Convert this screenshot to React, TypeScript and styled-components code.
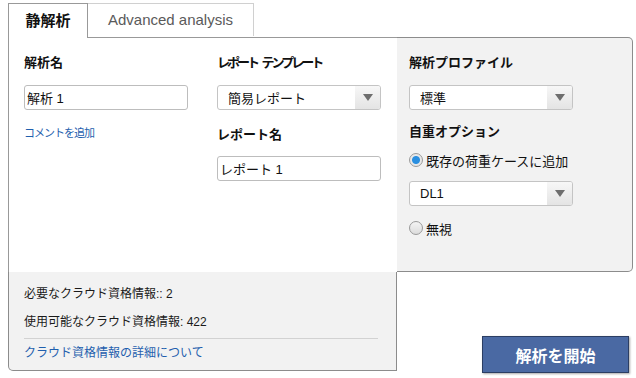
import React from 'react'
import styled, { createGlobalStyle } from 'styled-components'

const GlobalStyle = createGlobalStyle`
  html, body {
    margin: 0;
    padding: 0;
    background: #ffffff;
  }
  body {
    font-family: "Liberation Sans", "Noto Sans CJK JP", sans-serif;
    color: #111;
  }
  * {
    box-sizing: border-box;
  }
`

const Page = styled.div`
  width: 636px;
  height: 378px;
  padding: 3px 0 0 8px;
`

const TabBar = styled.div`
  display: flex;
  align-items: flex-start;
  height: 34px;
  position: relative;
  z-index: 1;
`

const Tab = styled.div<{ $active?: boolean }>`
  display: flex;
  align-items: center;
  justify-content: center;
  background: #fff;
  font-size: 15px;
  line-height: 18px;
  padding-bottom: 1px;
  ${(p) =>
    p.$active
      ? `
    width: 80px;
    height: 35px;
    border: 1px solid #999;
    border-bottom: none;
    font-weight: bold;
    color: #111;
  `
      : `
    width: 166px;
    height: 33px;
    border-top: 1px solid #d0d0d0;
    border-right: 1px solid #d0d0d0;
    color: #5a5a5a;
  `}
`

const Frame = styled.div`
  display: grid;
  grid-template-columns: 389px 236px;
  grid-template-rows: 235px 99px;
  width: 625px;
`

const MainArea = styled.div`
  border-left: 1px solid #999;
  border-top: 1px solid #999;
  background: #fff;
  padding: 16px 0 0 15px;
  display: grid;
  grid-template-columns: 164px 163px;
  column-gap: 29px;
  align-content: start;
`

const Column = styled.div`
  display: flex;
  flex-direction: column;
  align-items: flex-start;
`

const SidePanel = styled.div`
  background: #f2f2f2;
  border: 1px solid #8c8c8c;
  border-left: none;
  border-radius: 0 5px 5px 0;
  padding: 16px 0 0 12px;
  display: flex;
  flex-direction: column;
  align-items: flex-start;
`

const Footer = styled.div`
  background: #f2f2f2;
  border: 1px solid #8c8c8c;
  border-top: none;
  border-radius: 0 0 0 5px;
  padding: 13px 18px 0 15px;
  display: flex;
  flex-direction: column;
`

const ButtonCell = styled.div`
  display: flex;
  justify-content: flex-end;
  align-items: flex-end;
  padding-right: 4px;
`

const Label = styled.div<{ $gap?: number; $tight?: number }>`
  font-size: 13px;
  line-height: 18px;
  font-weight: bold;
  color: #111;
  margin-top: ${(p) => p.$gap ?? 0}px;
  letter-spacing: ${(p) => p.$tight ?? 0}px;
  word-spacing: 4px;
  white-space: nowrap;
`

const TextInput = styled.input<{ $gap?: number }>`
  width: 164px;
  height: 25px;
  margin: ${(p) => p.$gap ?? 0}px 0 0 0;
  padding: 0 0 0 2px;
  border: 1px solid #bdbdbd;
  border-radius: 3px;
  background: #fff;
  font-family: "Liberation Sans", "Noto Sans CJK JP", sans-serif;
  font-size: 13px;
  color: #111;
  outline: none;
`

const SelectBox = styled.div<{ $gap?: number }>`
  display: flex;
  width: 164px;
  height: 25px;
  margin-top: ${(p) => p.$gap ?? 0}px;
  border: 1px solid #c4c4c4;
  border-radius: 3px;
  background: #fff;
  overflow: hidden;
`

const SelectText = styled.div`
  flex: 1;
  display: flex;
  align-items: center;
  padding-left: 10px;
  font-size: 13px;
  color: #111;
`

const SelectArrow = styled.div`
  width: 25px;
  display: flex;
  align-items: center;
  justify-content: center;
  background: linear-gradient(#f7f7f7, #e4e4e4);
  &::after {
    content: '';
    width: 0;
    height: 0;
    border-left: 5px solid transparent;
    border-right: 5px solid transparent;
    border-top: 7px solid #6e6e6e;
  }
`

const LinkText = styled.a<{ $size?: number; $gap?: number; $tight?: number }>`
  display: block;
  color: #1f5fae;
  font-size: ${(p) => p.$size ?? 12}px;
  line-height: 16px;
  margin-top: ${(p) => p.$gap ?? 0}px;
  letter-spacing: ${(p) => p.$tight ?? 0}px;
  text-decoration: none;
  white-space: nowrap;
  cursor: pointer;
`

const RadioRow = styled.label<{ $gap?: number }>`
  display: flex;
  align-items: center;
  gap: 3px;
  height: 18px;
  margin-top: ${(p) => p.$gap ?? 0}px;
  font-size: 13px;
  color: #111;
  white-space: nowrap;
`

const RadioDot = styled.span<{ $checked?: boolean }>`
  width: 14px;
  height: 14px;
  border-radius: 50%;
  border: 1px solid #9a9a9a;
  background: ${(p) =>
    p.$checked
      ? 'radial-gradient(circle, #2a8fe0 0 3.5px, #e8e8e8 4.5px)'
      : 'linear-gradient(#f4f4f4, #dcdcdc)'};
`

const InfoLine = styled.div<{ $gap?: number }>`
  font-size: 12px;
  line-height: 18px;
  color: #1a1a1a;
  margin-top: ${(p) => p.$gap ?? 0}px;
  white-space: nowrap;
`

const Separator = styled.div`
  height: 1px;
  background: #d2d2d2;
  margin-top: 7px;
`

const StartButton = styled.button`
  width: 147px;
  height: 37px;
  margin-bottom: -2px;
  background: #4a69a3;
  border: 1px solid #2c3e63;
  box-shadow: 1px 1px 2px rgba(0, 0, 0, 0.35);
  color: #fff;
  font-family: "Liberation Sans", "Noto Sans CJK JP", sans-serif;
  font-size: 16px;
  font-weight: bold;
  cursor: pointer;
`

const Select: React.FC<{ value: string; gap?: number }> = ({ value, gap }) => (
  <SelectBox $gap={gap}>
    <SelectText>{value}</SelectText>
    <SelectArrow />
  </SelectBox>
)

export default function App() {
  return (
    <>
      <GlobalStyle />
      <Page>
        <TabBar>
          <Tab $active>静解析</Tab>
          <Tab>Advanced analysis</Tab>
        </TabBar>
        <Frame>
          <MainArea>
            <Column>
              <Label>解析名</Label>
              <TextInput $gap={13} defaultValue="解析 1" />
              <LinkText $size={11} $gap={15} $tight={-1}>
                コメントを追加
              </LinkText>
            </Column>
            <Column>
              <Label $tight={-3}>レポート テンプレート</Label>
              <Select value="簡易レポート" gap={13} />
              <Label $gap={16}>レポート名</Label>
              <TextInput $gap={12} defaultValue="レポート 1" />
            </Column>
          </MainArea>
          <SidePanel>
            <Label>解析プロファイル</Label>
            <Select value="標準" gap={13} />
            <Label $gap={13}>自重オプション</Label>
            <RadioRow $gap={10}>
              <RadioDot $checked />
              既存の荷重ケースに追加
            </RadioRow>
            <Select value="DL1" gap={12} />
            <RadioRow $gap={13}>
              <RadioDot />
              無視
            </RadioRow>
          </SidePanel>
          <Footer>
            <InfoLine>必要なクラウド資格情報:: 2</InfoLine>
            <InfoLine $gap={10}>使用可能なクラウド資格情報: 422</InfoLine>
            <Separator />
            <LinkText $gap={6}>クラウド資格情報の詳細について</LinkText>
          </Footer>
          <ButtonCell>
            <StartButton>解析を開始</StartButton>
          </ButtonCell>
        </Frame>
      </Page>
    </>
  )
}
